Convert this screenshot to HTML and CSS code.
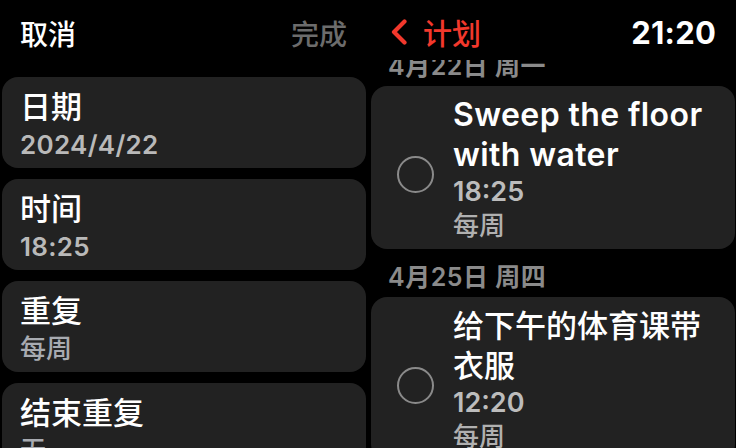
FILE: index.html
```html
<!DOCTYPE html>
<html lang="zh-CN">
<head>
<meta charset="utf-8">
<title>计划</title>
<link rel="stylesheet" href="styles.css">
</head>
<body>
<div class="screens">
  <div class="panel">
    <div class="edit-head">
      <span class="cancel">取消</span>
      <span class="done">完成</span>
    </div>
    <div class="fields">
      <div class="field">
        <div class="field-label">日期</div>
        <div class="field-value">2024/4/22</div>
      </div>
      <div class="field">
        <div class="field-label">时间</div>
        <div class="field-value">18:25</div>
      </div>
      <div class="field">
        <div class="field-label">重复</div>
        <div class="field-value cjk">每周</div>
      </div>
      <div class="field">
        <div class="field-label">结束重复</div>
        <div class="field-value cjk">无</div>
      </div>
    </div>
  </div>

  <div class="panel">
    <div class="nav">
      <div class="back">
        <svg class="chev" width="16" height="26" viewBox="0 0 16 26"><polyline points="13.5,2.5 3,13 13.5,23.5" fill="none" stroke="#f2382c" stroke-width="4.2" stroke-linecap="round" stroke-linejoin="round"/></svg>
        <span class="back-text">计划</span>
      </div>
      <span class="clock">21:20</span>
    </div>
    <div class="list">
      <section class="day">
        <div class="day-head">4月22日 周一</div>
        <div class="task">
          <span class="check"></span>
          <div class="task-body">
            <div class="task-title latin">Sweep the floor with water</div>
            <div class="task-time">18:25</div>
            <div class="task-repeat">每周</div>
          </div>
        </div>
      </section>
      <section class="day">
        <div class="day-head">4月25日 周四</div>
        <div class="task">
          <span class="check"></span>
          <div class="task-body">
            <div class="task-title">给下午的体育课带衣服</div>
            <div class="task-time">12:20</div>
            <div class="task-repeat">每周</div>
          </div>
        </div>
      </section>
    </div>
  </div>
</div>
</body>
</html>
```
FILE: styles.css
```css
* { box-sizing: border-box; }
html, body {
  margin: 0;
  padding: 0;
  background: #000;
}
body {
  width: 736px;
  height: 448px;
  overflow: hidden;
  font-family: "Inter", "Noto Sans CJK SC", sans-serif;
  color: #fff;
}
.screens {
  display: flex;
  width: 736px;
  height: 448px;
}
.panel {
  flex: 0 0 368px;
  width: 368px;
  height: 448px;
  overflow: hidden;
  display: flex;
  flex-direction: column;
}

/* left: edit screen */
.edit-head {
  height: 66px;
  flex: none;
  display: flex;
  align-items: center;
  justify-content: space-between;
  padding: 0 21px 0 20px;
  font-size: 28px;
  font-weight: 500;
}
.cancel { color: #fff; }
.done { color: #6c6c6c; }
.fields {
  display: flex;
  flex-direction: column;
  gap: 11px;
  padding: 11px 2px 0;
}
.field {
  flex: none;
  height: 91px;
  background: #222222;
  border-radius: 16px;
  padding: 12px 18px 0 18px;
}
.field-label {
  font-size: 31px;
  line-height: 36px;
  font-weight: 500;
  color: #fff;
}
.field-value {
  font-size: 26px;
  line-height: 39px;
  font-weight: 600;
  color: #b9b9b9;
  letter-spacing: 0.3px;
}
.field-value.cjk {
  font-weight: 500;
  color: #a8abb1;
  letter-spacing: 0;
}

/* right: plan list */
.nav {
  height: 60px;
  flex: none;
  display: flex;
  align-items: center;
  justify-content: space-between;
  padding: 4px 20px 0 23px;
}
.back {
  display: flex;
  align-items: center;
  gap: 16px;
  color: #f2382c;
  font-size: 29px;
  font-weight: 500;
}
.chev { display: block; flex: none; }
.clock {
  font-size: 31px;
  font-weight: 700;
  color: #fff;
  letter-spacing: 0.2px;
}
.list {
  flex: 1;
  overflow: hidden;
}
.day:first-child .day-head { margin-top: -22px; }
.day-head {
  height: 48px;
  padding: 14px 20px 6px 20px;
  font-size: 25px;
  line-height: 28px;
  font-weight: 600;
  color: #8a8a8a;
  letter-spacing: 0.5px;
}
.task {
  display: flex;
  align-items: center;
  margin: 0 1px 0 3px;
  background: #222222;
  border-radius: 16px;
  padding: 9px 22px 6px 26px;
}
.check {
  flex: none;
  width: 37px;
  height: 37px;
  border: 2px solid #8a8a8a;
  border-radius: 50%;
  margin: 11px 19px 0 0;
}
.task-body { flex: 1; min-width: 0; }
.task-title {
  font-size: 31px;
  line-height: 40px;
  font-weight: 500;
  color: #fff;
}
.task-title.latin {
  font-size: 32px;
  font-weight: 600;
  letter-spacing: 0.4px;
}
.task-time {
  font-size: 27px;
  line-height: 34px;
  font-weight: 600;
  color: #bcbcbc;
}
.task-repeat {
  font-size: 26px;
  line-height: 34px;
  font-weight: 500;
  color: #b0b0b0;
}
```
